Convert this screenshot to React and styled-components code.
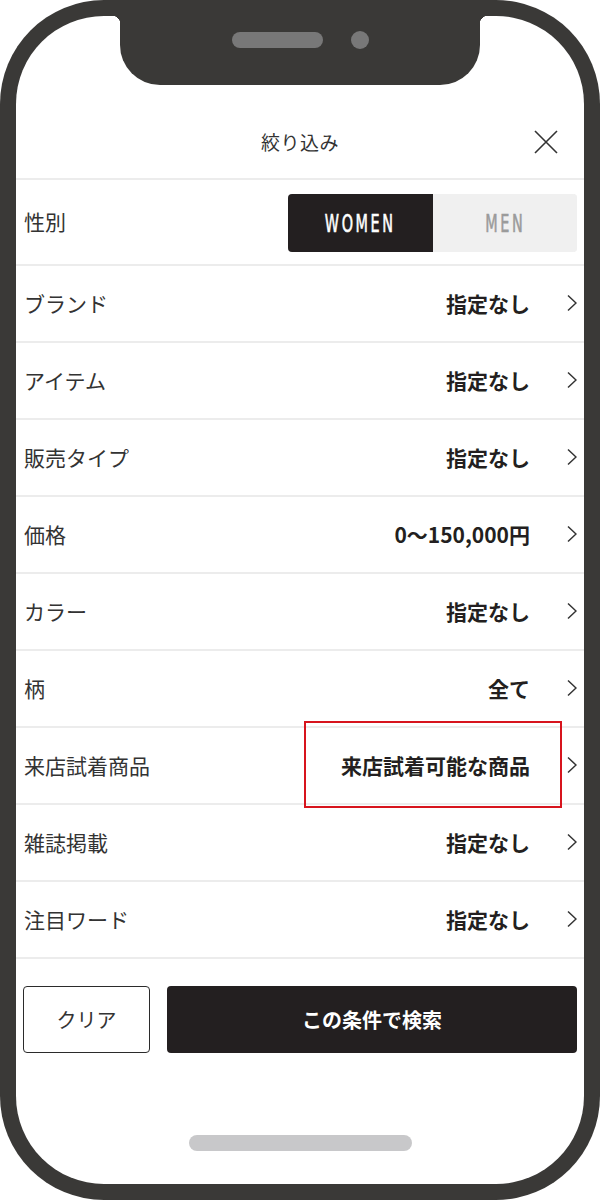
import React from "react";
import styled, { createGlobalStyle } from "styled-components";

const Global = createGlobalStyle`
  html, body { margin: 0; padding: 0; background: #ffffff; }
  body { font-family: "Noto Sans CJK JP", "Noto Sans", sans-serif; }
  * { box-sizing: border-box; }
`;

const FRAME = "#3a3937";

const Frame = styled.div`
  position: relative;
  width: 600px;
  height: 1200px;
  background: ${FRAME};
  border-radius: 104px;
  padding: 16px;
`;

const Screen = styled.div`
  height: 100%;
  background: #ffffff;
  border-radius: 88px;
  overflow: hidden;
  display: flex;
  flex-direction: column;
`;

const Notch = styled.div`
  position: absolute;
  top: 0;
  left: 120px;
  width: 360px;
  height: 85px;
  background: ${FRAME};
  border-radius: 0 0 40px 40px;
  display: flex;
  justify-content: center;
  align-items: center;
  gap: 28px;
  padding-bottom: 6px;
  &::before, &::after {
    content: "";
    position: absolute;
    top: 16px;
    width: 8px;
    height: 8px;
  }
  &::before {
    left: -8px;
    background: radial-gradient(circle at 0 100%, transparent 8px, ${FRAME} 8.5px);
  }
  &::after {
    right: -8px;
    background: radial-gradient(circle at 100% 100%, transparent 8px, ${FRAME} 8.5px);
  }
`;

const Speaker = styled.div`
  width: 91px;
  height: 16px;
  border-radius: 8px;
  background: #787878;
`;

const Camera = styled.div`
  width: 18px;
  height: 18px;
  border-radius: 50%;
  background: #787878;
`;

const Header = styled.div`
  margin-top: 89px;
  height: 75px;
  display: grid;
  grid-template-columns: 1fr auto 1fr;
  align-items: center;
  border-bottom: 2px solid #ececec;
`;

const Title = styled.h1`
  grid-column: 2;
  margin: 0;
  font-size: 19px;
  font-weight: 400;
  color: #333333;
  letter-spacing: 0.5px;
`;

const CloseButton = styled.button`
  grid-column: 3;
  justify-self: end;
  margin-right: 26px;
  width: 24px;
  height: 24px;
  padding: 0;
  border: none;
  background: none;
  display: flex;
`;

const Row = styled.div`
  position: relative;
  display: flex;
  align-items: center;
  height: ${(p) => (p.$tall ? 86 : 77)}px;
  padding: 0 7px 2px 8px;
  border-bottom: 2px solid #ececec;
`;

const Label = styled.span`
  font-size: 21px;
  font-weight: 400;
  color: #333333;
`;

const Value = styled.span`
  margin-left: auto;
  font-size: 21px;
  font-weight: 700;
  color: #231f20;
`;

const Chevron = styled.svg`
  margin-left: 37px;
  width: 10px;
  height: 18px;
  flex: none;
`;

const Highlight = styled.div`
  position: absolute;
  top: -7px;
  right: 22px;
  width: 258px;
  height: 87px;
  border: 2px solid #d7141d;
  pointer-events: none;
`;

const Toggle = styled.div`
  margin-left: auto;
  margin-top: 4px;
  display: flex;
  width: 289px;
  height: 58px;
  border-radius: 4px;
  overflow: hidden;
  background: #f0f0f0;
`;

const Segment = styled.div`
  flex: 1;
  display: flex;
  align-items: center;
  justify-content: center;
  background: ${(p) => (p.$active ? "#231f20" : "#f0f0f0")};
  color: ${(p) => (p.$active ? "#ffffff" : "#9b9b9b")};
`;

const SegmentText = styled.span`
  display: inline-block;
  font-family: "DejaVu Sans Condensed", "Liberation Sans Narrow", "Liberation Sans", sans-serif;
  font-size: 25px;
  font-weight: 400;
  letter-spacing: 4px;
  -webkit-text-stroke: 0.6px currentColor;
  transform: scaleX(0.64);
`;

const Footer = styled.div`
  display: flex;
  gap: 17px;
  padding: 27px 7px 0 7px;
`;

const ClearButton = styled.button`
  width: 127px;
  height: 67px;
  border: 1.5px solid #2b2b2b;
  border-radius: 4px;
  background: #ffffff;
  font-family: inherit;
  font-size: 20px;
  font-weight: 400;
  color: #333333;
`;

const SearchButton = styled.button`
  flex: 1;
  height: 67px;
  border: none;
  border-radius: 4px;
  background: #231f20;
  font-family: inherit;
  font-size: 20px;
  font-weight: 700;
  color: #ffffff;
`;

const Spacer = styled.div`
  flex: 1;
`;

const HomeIndicator = styled.div`
  align-self: center;
  width: 223px;
  height: 16px;
  border-radius: 8px;
  background: #c8c8ca;
  margin-bottom: 33px;
`;

const ChevronIcon = () => (
  <Chevron viewBox="0 0 10 18">
    <polyline points="1,1.5 9,9 1,16.5" fill="none" stroke="#333" strokeWidth="1.5" />
  </Chevron>
);

const rows = [
  { label: "ブランド", value: "指定なし" },
  { label: "アイテム", value: "指定なし" },
  { label: "販売タイプ", value: "指定なし" },
  { label: "価格", value: "0〜150,000円" },
  { label: "カラー", value: "指定なし" },
  { label: "柄", value: "全て" },
  { label: "来店試着商品", value: "来店試着可能な商品", highlight: true },
  { label: "雑誌掲載", value: "指定なし" },
  { label: "注目ワード", value: "指定なし" },
];

export default function App() {
  return (
    <>
      <Global />
      <Frame>
        <Screen>
          <Header>
            <Title>絞り込み</Title>
            <CloseButton aria-label="閉じる">
              <svg width="24" height="24" viewBox="0 0 24 24">
                <path d="M1 1 L23 23 M23 1 L1 23" stroke="#333" strokeWidth="1.6" fill="none" />
              </svg>
            </CloseButton>
          </Header>
          <Row $tall>
            <Label>性別</Label>
            <Toggle>
              <Segment $active>
                <SegmentText>WOMEN</SegmentText>
              </Segment>
              <Segment>
                <SegmentText>MEN</SegmentText>
              </Segment>
            </Toggle>
          </Row>
          {rows.map((r) => (
            <Row key={r.label}>
              <Label>{r.label}</Label>
              <Value>{r.value}</Value>
              <ChevronIcon />
              {r.highlight && <Highlight />}
            </Row>
          ))}
          <Footer>
            <ClearButton>クリア</ClearButton>
            <SearchButton>この条件で検索</SearchButton>
          </Footer>
          <Spacer />
          <HomeIndicator />
        </Screen>
        <Notch>
          <Speaker />
          <Camera />
        </Notch>
      </Frame>
    </>
  );
}
